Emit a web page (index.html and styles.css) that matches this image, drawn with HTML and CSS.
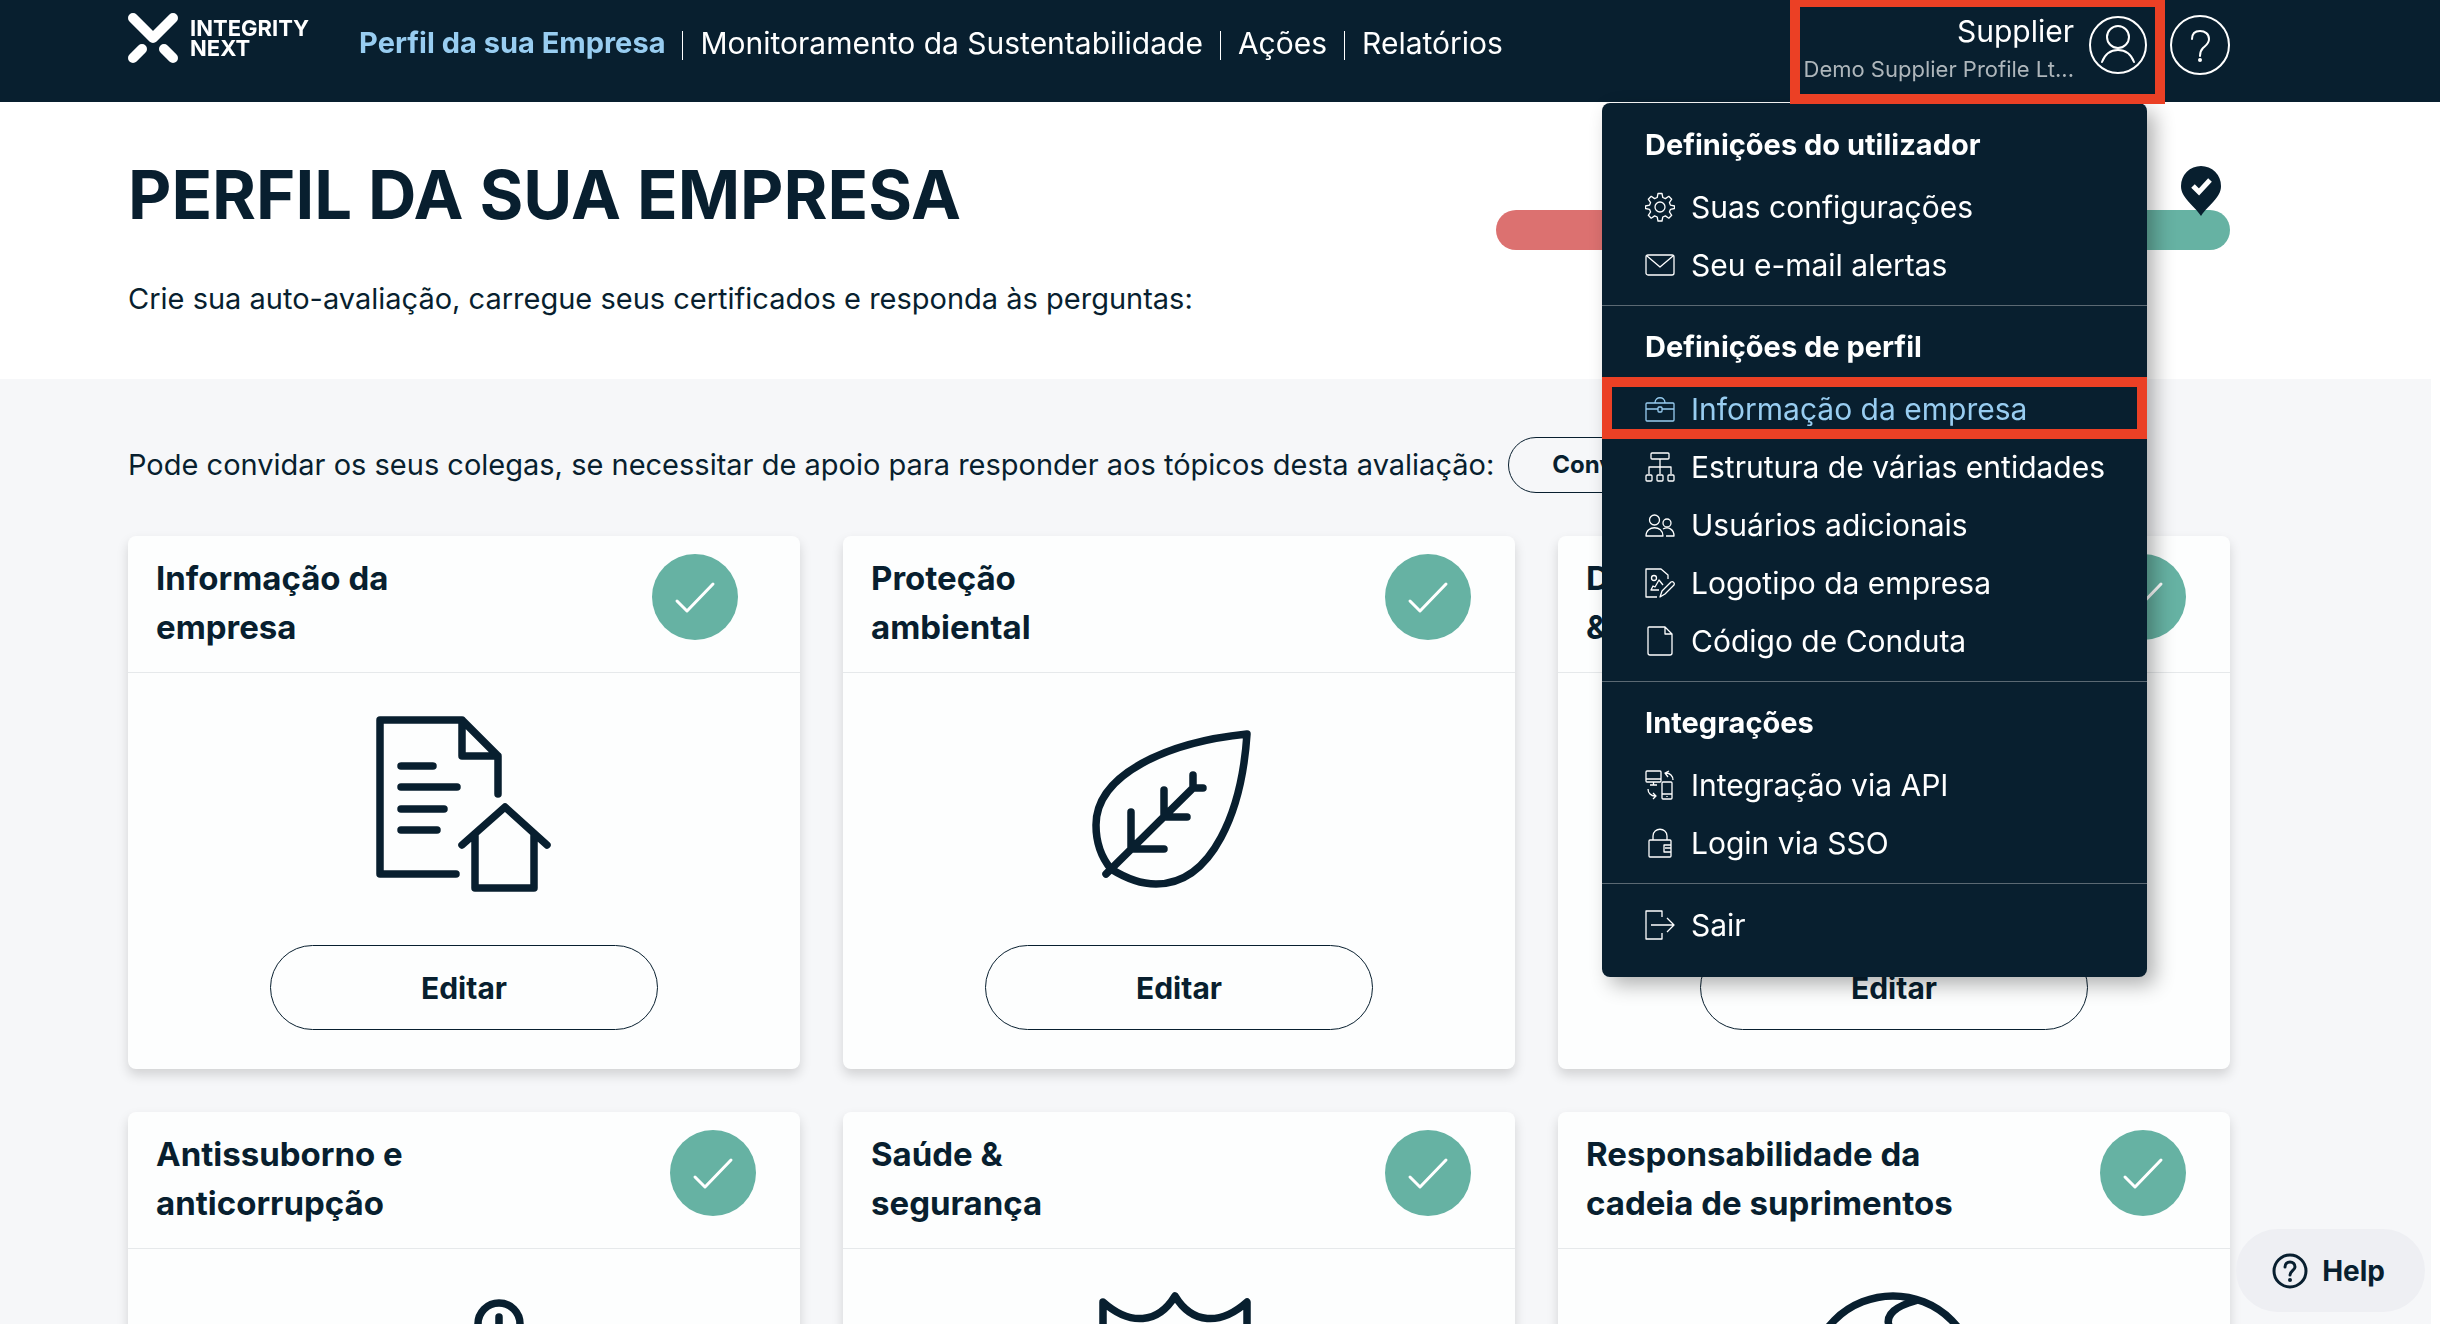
FILE: index.html
```
<!DOCTYPE html>
<html lang="pt">
<head>
    <meta charset="utf-8">
    <title>Perfil da sua Empresa</title>
    <link rel="stylesheet" href="styles.css">
</head>
<body>
    <!-- shared icons -->
    <svg class="sprite" aria-hidden="true">
        <symbol id="check" viewBox="0 0 86 86">
            <path d="M25 47l10 10 26-27" fill="none" stroke="currentColor" stroke-width="3" stroke-linecap="round" stroke-linejoin="round"/>
        </symbol>
    </svg>

    <header class="topbar">
        <div class="wrap topbar-inner">
            <a class="logo" href="#">
                <svg class="logo-mark" viewBox="0 0 50 50">
                    <g stroke="#ffffff" stroke-linecap="round" stroke-linejoin="round" fill="none">
                        <path d="M5 5l20 20L45 5" stroke-width="10"/>
                        <path d="M5 45l9-9M45 45l-9-9" stroke-width="10"/>
                    </g>
                </svg>
                <span class="logo-text">INTEGRITY<br>NEXT</span>
            </a>
            <nav class="nav">
                <a class="nav-link active" href="#">Perfil da sua Empresa</a>
                <a class="nav-link" href="#">Monitoramento da Sustentabilidade</a>
                <a class="nav-link" href="#">Ações</a>
                <a class="nav-link" href="#">Relatórios</a>
            </nav>
            <div class="account">
                <button class="user" type="button">
                    <span class="user-text">
                        <span class="user-name">Supplier</span>
                        <span class="user-company">Demo Supplier Profile Lt...</span>
                    </span>
                    <svg class="avatar" viewBox="0 0 58 58" fill="none" stroke="#ffffff" stroke-width="2">
                        <circle cx="29" cy="29" r="28"/>
                        <circle cx="29" cy="21" r="11"/>
                        <path d="M13 46c3-8 9-12 16-12s13 4 16 12" stroke-linecap="round"/>
                    </svg>
                </button>
                <button class="help-round" type="button" aria-label="Ajuda">
                    <svg viewBox="0 0 60 60" fill="none" stroke="#ffffff" stroke-width="2">
                        <circle cx="30" cy="30" r="29"/>
                        <path d="M22 24c0-5 3-8 8-8s9 3 9 8-4 7-6 9-3 4-3 8" stroke-linecap="round"/>
                        <circle cx="30" cy="45" r="2" fill="#ffffff" stroke="none"/>
                    </svg>
                </button>

                <div class="menu">
                    <section class="menu-section">
                        <h2 class="menu-title">Definições do utilizador</h2>
                        <a class="menu-item" href="#">
                            <svg class="menu-icon" viewBox="0 0 30 30"><circle cx="15" cy="15" r="5"/><path d="M13 1.500h4l.8 4 2.600 1.100 3.400-2.300 2.900 2.900-2.300 3.400 1.100 2.600 4 .8v2.500l-4 .8-1.100 2.600 2.300 3.400-2.900 2.900-3.400-2.300-2.600 1.100-.8 4h-4l-.8-4-2.600-1.100-3.400 2.300-2.900-2.900 2.300-3.400-1.100-2.600-4-.8V14l4-.8 1.100-2.600-2.300-3.400 2.900-2.900 3.400 2.300 2.600-1.100z"/></svg>
                            Suas configurações
                        </a>
                        <a class="menu-item" href="#">
                            <svg class="menu-icon" viewBox="0 0 30 30"><rect x="1" y="5" width="28" height="20" rx="2"/><path d="M2 6l13 11L28 6"/></svg>
                            Seu e-mail alertas
                        </a>
                    </section>
                    <section class="menu-section">
                        <h2 class="menu-title">Definições de perfil</h2>
                        <a class="menu-item current" href="#">
                            <svg class="menu-icon" viewBox="0 0 30 30"><rect x="1" y="9" width="28" height="18" rx="1"/><path d="M10 9c0-7 10-7 10 0M1 15h12M17 15h12"/><rect x="13" y="13" width="4" height="5" rx="1"/></svg>
                            Informação da empresa
                        </a>
                        <a class="menu-item" href="#">
                            <svg class="menu-icon" viewBox="0 0 30 30"><rect x="6" y="1" width="18" height="6" rx="1"/><path d="M15 7v15M4 22v-7h22v7"/><rect x="1" y="23" width="6" height="6" rx="1"/><rect x="12" y="23" width="6" height="6" rx="1"/><rect x="23" y="23" width="6" height="6" rx="1"/></svg>
                            Estrutura de várias entidades
                        </a>
                        <a class="menu-item" href="#">
                            <svg class="menu-icon" viewBox="0 0 30 30"><circle cx="9.500" cy="10" r="5"/><path d="M1 26c0-11 17-11 17 0z"/><circle cx="22" cy="13" r="4"/><path d="M18 19c6-3 11 1 11 7h-8"/></svg>
                            Usuários adicionais
                        </a>
                        <a class="menu-item" href="#">
                            <svg class="menu-icon" viewBox="0 0 30 30"><path d="M12 29H1V1h15l7 6v4"/><circle cx="9" cy="10" r="2.500"/><path d="M14 22H6l2-4 2 1 4-7 4 5M15 29l2-6 9-9c2-1 4 1 3 3l-9 9z"/></svg>
                            Logotipo da empresa
                        </a>
                        <a class="menu-item" href="#">
                            <svg class="menu-icon" viewBox="0 0 30 30"><path d="M4 1h16l7 7v19q0 2-2 2H5q-2 0-2-2V2q0-1 1-1zM20 1v7h7"/></svg>
                            Código de Conduta
                        </a>
                    </section>
                    <section class="menu-section">
                        <h2 class="menu-title">Integrações</h2>
                        <a class="menu-item" href="#">
                            <svg class="menu-icon" viewBox="0 0 30 30"><rect x="1" y="1" width="15" height="11" rx="1"/><path d="M1 9h15M8.500 12v3M5 15h7"/><rect x="17" y="12" width="10" height="17" rx="1"/><path d="M17 24h10M22 26v1M28 10c0-4-3-7-7-7M24 1l-4 2 3 4M3 19c0 4 3 7 7 7M8 23l3 3-3 3"/></svg>
                            Integração via API
                        </a>
                        <a class="menu-item" href="#">
                            <svg class="menu-icon" viewBox="0 0 30 30"><rect x="4" y="12" width="22" height="17" rx="1"/><path d="M8 12V8c0-9 14-9 14 0v4M26 17h-7v7h7M20 20h6"/></svg>
                            Login via SSO
                        </a>
                    </section>
                    <section class="menu-section">
                        <a class="menu-item" href="#">
                            <svg class="menu-icon" viewBox="0 0 30 30"><path d="M17 7V1H1v28h16v-6M6 15h23M22 8l7 7-7 7"/></svg>
                            Sair
                        </a>
                    </section>
                </div>
            </div>
        </div>
    </header>

    <section class="intro">
        <div class="wrap intro-inner">
            <div>
                <h1>PERFIL DA SUA EMPRESA</h1>
                <p class="intro-text">Crie sua auto-avaliação, carregue seus certificados e responda às perguntas:</p>
            </div>
            <div class="rating">
                <svg class="pin" viewBox="0 0 40 50">
                    <path d="M20 50C12 38 0 32 0 20a20 20 0 0 1 40 0c0 12-12 18-20 30z" fill="#081f2f"/>
                    <path d="M12 20l6 6 11-12" fill="none" stroke="#ffffff" stroke-width="5"/>
                </svg>
            </div>
        </div>
    </section>

    <main class="wrap">
        <div class="invite">
            <p>Pode convidar os seus colegas, se necessitar de apoio para responder aos tópicos desta avaliação:</p>
            <button class="invite-btn" type="button">Convidar</button>
        </div>

        <div class="cards">
            <article class="card">
                <div class="card-head">
                    <h3>Informação da<br>empresa</h3>
                    <svg class="done shifted"><use href="#check"/></svg>
                </div>
                <svg class="card-icon" viewBox="0 0 200 200">
                    <path d="M92 177H16V23h82l36 36v38M98 23v36h36M37 69h32M37 90h56M37 112h43M37 133h36"/>
                    <path d="M98 148l43-38 42 38M111 137v54h59v-54"/>
                </svg>
                <button class="edit" type="button">Editar</button>
            </article>
            <article class="card">
                <div class="card-head">
                    <h3>Proteção<br>ambiental</h3>
                    <svg class="done"><use href="#check"/></svg>
                </div>
                <svg class="card-icon" viewBox="0 0 200 200">
                    <path d="M168 37C89 45 17 77 17 128c0 16 5 32 15 44 16 10 29 15 45 15 57 0 86-74 91-150z"/>
                    <path d="M27 177l87-86V78M114 91h10M85 93v27h23M52 115v37h33"/>
                </svg>
                <button class="edit" type="button">Editar</button>
            </article>
            <article class="card">
                <div class="card-head">
                    <h3>Direitos humanos<br>&amp; trabalho</h3>
                    <svg class="done"><use href="#check"/></svg>
                </div>
                <svg class="card-icon" viewBox="0 0 200 200">
                    <circle cx="100" cy="60" r="28"/>
                    <path d="M46 180c0-76 108-76 108 0z"/>
                </svg>
                <button class="edit" type="button">Editar</button>
            </article>
            <article class="card">
                <div class="card-head">
                    <h3>Antissuborno e<br>anticorrupção</h3>
                    <svg class="done"><use href="#check"/></svg>
                </div>
                <svg class="card-icon" viewBox="0 0 200 200">
                    <circle cx="135" cy="51" r="21"/>
                    <path d="M135 44v16M30 120h140"/>
                </svg>
                <button class="edit" type="button">Editar</button>
            </article>
            <article class="card">
                <div class="card-head">
                    <h3>Saúde &amp;<br>segurança</h3>
                    <svg class="done"><use href="#check"/></svg>
                </div>
                <svg class="card-icon" viewBox="0 0 200 200">
                    <path d="M24 29c27 24 55 22 72-6 17 28 45 30 72 6v80c0 40-36 66-72 80-36-14-72-40-72-80z"/>
                </svg>
                <button class="edit" type="button">Editar</button>
            </article>
            <article class="card">
                <div class="card-head">
                    <h3>Responsabilidade da<br>cadeia de suprimentos</h3>
                    <svg class="done"><use href="#check"/></svg>
                </div>
                <svg class="card-icon" viewBox="0 0 200 200">
                    <circle cx="99" cy="106" r="83"/>
                    <path d="M121 28c-18 5-30 13-26 25 4 8 14 0 18 10"/>
                </svg>
                <button class="edit" type="button">Editar</button>
            </article>
        </div>
    </main>

    <button class="help-btn" type="button">
        <svg viewBox="0 0 36 36" fill="none" stroke="#081f2f" stroke-width="3">
            <circle cx="18" cy="18" r="16"/>
            <path d="M13 14c0-3 2-5 5-5s5 2 5 5-5 4-5 8" stroke-linecap="round"/>
            <circle cx="18" cy="27" r="2" fill="#081f2f" stroke="none"/>
        </svg>
        Help
    </button>
</body>
</html>
```
FILE: styles.css
```
* {
    box-sizing: border-box;
}

html {
    overflow: hidden;
}

body {
    margin: 0;
    background-color: #f6f7f9;
    color: #081f2f;
    font-family: Inter, "Noto Sans", sans-serif;
    font-size: 29px;
    line-height: 38px;
}

/* scrollbar gutter */
body::after {
    content: "";
    position: fixed;
    top: 0;
    right: 0;
    bottom: 0;
    width: 9px;
    background-color: #ffffff;
}

h1, h2, h3, p {
    margin: 0;
}

a {
    color: inherit;
    text-decoration: none;
}

button {
    font-family: inherit;
    font-size: inherit;
    line-height: inherit;
    color: inherit;
    cursor: pointer;
}

.sprite {
    display: none;
}

.wrap {
    padding: 0 210px 0 128px;
}

/* top bar */
.topbar {
    position: relative;
    z-index: 2;
    height: 102px;
    background-color: #081f2f;
    color: #ffffff;
}

.topbar-inner {
    display: flex;
    align-items: flex-start;
}

.logo {
    display: flex;
    align-items: center;
    gap: 12px;
    margin-top: 13px;
}

.logo-mark {
    width: 50px;
    height: 50px;
}

.logo-text {
    font-size: 22px;
    line-height: 20px;
    font-weight: bold;
}

.nav {
    display: flex;
    margin: 24px 0 0 50px;
}

.nav-link {
    position: relative;
    margin-right: 35px;
    font-size: 30px;
}

.nav-link + .nav-link::before {
    content: "";
    position: absolute;
    left: -18px;
    top: 7px;
    height: 29px;
    border-left: 1px solid #ffffff;
}

.nav-link.active {
    color: #98cdf1;
    font-size: 29px;
    font-weight: bold;
}

.account {
    position: relative;
    display: flex;
    align-items: flex-start;
    gap: 5px;
    margin-left: auto;
}

.user {
    display: flex;
    align-items: flex-start;
    gap: 15px;
    height: 104px;
    padding: 5px 8px 0 4px;
    background: none;
    border: 10px solid #eb4025;
    border-top-width: 7px;
    text-align: right;
}

.user-text {
    display: flex;
    flex-direction: column;
}

.user-name {
    font-size: 30px;
}

.user-company {
    color: #aeb6bb;
    font-size: 22px;
}

.avatar {
    width: 58px;
    height: 58px;
    margin-top: 4px;
}

.help-round {
    padding: 0;
    margin-top: 15px;
    background: none;
    border: none;
}

.help-round svg {
    display: block;
    width: 60px;
    height: 60px;
}

/* account menu */
.menu {
    position: absolute;
    top: 103px;
    right: 83px;
    width: 545px;
    padding: 1px 0 12px;
    background-color: #081f2f;
    border-radius: 8px;
    box-shadow: 8px 8px 20px rgba(0, 0, 0, 0.3);
    z-index: -1;
}

.menu-section {
    padding: 22px 0 11px;
    border-bottom: 1px solid #5b6973;
}

.menu-section:last-child {
    padding-top: 12px;
    border-bottom: none;
}

.menu-title {
    margin: 0 43px 14px;
    font-size: 29px;
    line-height: 38px;
}

.menu-item {
    display: flex;
    align-items: center;
    gap: 16px;
    height: 58px;
    padding: 0 43px;
    font-size: 30px;
    white-space: nowrap;
}

.menu-item.current {
    position: relative;
    color: #98cdf1;
}

.menu-item.current::after {
    content: "";
    position: absolute;
    top: -3px;
    right: 0;
    bottom: -1px;
    left: 0;
    border: 10px solid #eb4025;
}

.menu-icon {
    flex: none;
    width: 30px;
    height: 30px;
    fill: none;
    stroke: currentColor;
    stroke-width: 1.3;
    stroke-linejoin: round;
}

/* page intro */
.intro {
    background-color: #ffffff;
    height: 277px;
}

.intro-inner {
    display: flex;
    justify-content: space-between;
}

h1 {
    margin-top: 53px;
    font-size: 67px;
    line-height: 80px;
}

.intro-text {
    margin-top: 45px;
}

.rating {
    position: relative;
    width: 734px;
    height: 40px;
    margin-top: 108px;
    border-radius: 20px;
    background: linear-gradient(to right, #dc7170 50%, #66b2a3 50%);
}

.pin {
    position: absolute;
    top: -44px;
    right: 9px;
    width: 40px;
    height: 50px;
}

/* invite row */
.invite {
    display: flex;
    align-items: center;
    gap: 14px;
    margin: 58px 0 43px;
    white-space: nowrap;
}

.invite-btn {
    height: 56px;
    padding: 0 43px;
    background: none;
    border: 1px solid #081f2f;
    border-radius: 28px;
    font-size: 24px;
    font-weight: bold;
}

/* cards */
.cards {
    display: grid;
    grid-template-columns: repeat(3, 1fr);
    gap: 43px;
}

.card {
    display: flex;
    flex-direction: column;
    align-items: center;
    padding-bottom: 39px;
    background-color: #fdfefe;
    border-radius: 8px;
    box-shadow: 0 6px 12px rgba(0, 0, 0, 0.15);
}

.card-head {
    display: flex;
    justify-content: space-between;
    width: 100%;
    height: 137px;
    padding: 18px 44px 0 28px;
    border-bottom: 1px solid #e6e9eb;
}

h3 {
    font-size: 33px;
    line-height: 49px;
}

.done {
    flex: none;
    width: 86px;
    height: 86px;
    border-radius: 50%;
    background-color: #66b2a3;
    color: #ffffff;
}

.done.shifted {
    margin-right: 18px;
}

.card-icon {
    width: 200px;
    height: 200px;
    margin: 24px 0 48px;
    fill: none;
    stroke: #081f2f;
    stroke-width: 7.5;
    stroke-linecap: round;
    stroke-linejoin: round;
}

.edit {
    width: 388px;
    height: 85px;
    background: none;
    border: 1px solid #081f2f;
    border-radius: 43px;
    font-size: 30px;
    font-weight: bold;
}

/* floating help */
.help-btn {
    position: fixed;
    right: 15px;
    bottom: 12px;
    display: flex;
    align-items: center;
    gap: 14px;
    height: 83px;
    padding: 0 40px 0 36px;
    background-color: #eeeff3;
    border: none;
    border-radius: 42px;
    font-size: 28px;
    font-weight: bold;
}

.help-btn svg {
    width: 36px;
    height: 36px;
}
```
